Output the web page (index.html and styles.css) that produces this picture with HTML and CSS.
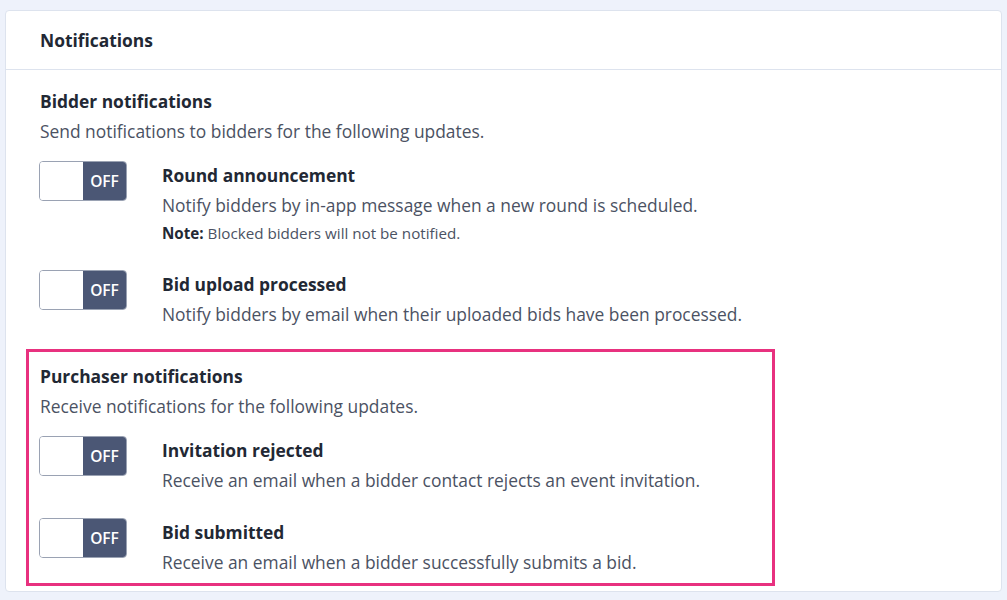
FILE: index.html
```html
<!DOCTYPE html>
<html lang="en">
<head>
<meta charset="utf-8">
<title>Notifications</title>
<link rel="stylesheet" href="styles.css">
</head>
<body>
<div class="card">
  <div class="card-header">Notifications</div>
  <div class="card-body">
    <section class="group">
      <h3 class="group-title">Bidder notifications</h3>
      <p class="group-desc">Send notifications to bidders for the following updates.</p>
      <div class="rows">
        <div class="row">
          <div class="toggle"><span class="knob"></span><span class="state">OFF</span></div>
          <div class="text">
            <div class="title">Round announcement</div>
            <div class="desc">Notify bidders by in-app message when a new round is scheduled.</div>
            <div class="note"><b>Note:</b> Blocked bidders will not be notified.</div>
          </div>
        </div>
        <div class="row">
          <div class="toggle"><span class="knob"></span><span class="state">OFF</span></div>
          <div class="text">
            <div class="title">Bid upload processed</div>
            <div class="desc">Notify bidders by email when their uploaded bids have been processed.</div>
          </div>
        </div>
      </div>
    </section>
    <section class="group highlight">
      <h3 class="group-title">Purchaser notifications</h3>
      <p class="group-desc">Receive notifications for the following updates.</p>
      <div class="rows">
        <div class="row">
          <div class="toggle"><span class="knob"></span><span class="state">OFF</span></div>
          <div class="text">
            <div class="title">Invitation rejected</div>
            <div class="desc">Receive an email when a bidder contact rejects an event invitation.</div>
          </div>
        </div>
        <div class="row">
          <div class="toggle"><span class="knob"></span><span class="state">OFF</span></div>
          <div class="text">
            <div class="title">Bid submitted</div>
            <div class="desc">Receive an email when a bidder successfully submits a bid.</div>
          </div>
        </div>
      </div>
    </section>
  </div>
</div>
</body>
</html>
```

FILE: styles.css
```css
* { box-sizing: border-box; }
html, body { margin: 0; padding: 0; }
body {
  background: #eef2fb;
  font-family: "Open Sans", "Liberation Sans", sans-serif;
  color: #4b5263;
  padding: 10px 5px 8px 5px;
}
.card {
  background: #fff;
  border: 1px solid #dde3ee;
  border-radius: 4px;
  height: 582px;
}
.card-header {
  padding: 17px 34px;
  font-size: 17.4px;
  line-height: 24px;
  font-weight: 700;
  color: #222834;
  border-bottom: 1px solid #dde3ee;
}
.card-body {
  padding: 19px 34px 8px 34px;
}
.group-title {
  margin: 0;
  font-size: 17.4px;
  line-height: 24px;
  font-weight: 700;
  color: #222834;
}
.group-desc {
  margin: 6px 0 0 0;
  font-size: 17.4px;
  line-height: 24px;
}
.rows {
  display: flex;
  flex-direction: column;
  gap: 26px;
  margin-top: 18px;
}
.row {
  display: flex;
  gap: 35px;
  align-items: flex-start;
}
.toggle {
  flex: none;
  display: flex;
  width: 88px;
  height: 40px;
  margin-left: -1px;
  border: 1px solid #9aa2b3;
  border-radius: 4px;
  overflow: hidden;
}
.knob {
  width: 43px;
  background: #fff;
}
.state {
  flex: 1;
  background: #4b5775;
  color: #fff;
  font-size: 15.5px;
  font-weight: 600;
  display: flex;
  align-items: center;
  justify-content: center;
}
.text {
  padding-top: 2px;
}
.title {
  font-size: 17.4px;
  line-height: 24px;
  font-weight: 700;
  color: #222834;
}
.desc {
  margin-top: 6px;
  font-size: 17.4px;
  line-height: 24px;
}
.note {
  margin-top: 6px;
  font-size: 15.2px;
  line-height: 21px;
}
.note b { color: #222834; font-weight: 700; }
.highlight {
  margin: 23px 0 0 -14px;
  width: 749px;
  border: 3px solid #e8317f;
  padding: 12px 11px 9px 11px;
}
```
